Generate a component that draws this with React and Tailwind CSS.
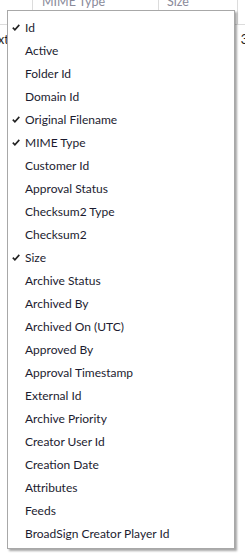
import React from 'react';

const columns = [
    { label: 'Id', checked: true },
    { label: 'Active' },
    { label: 'Folder Id' },
    { label: 'Domain Id' },
    { label: 'Original Filename', checked: true },
    { label: 'MIME Type', checked: true },
    { label: 'Customer Id' },
    { label: 'Approval Status' },
    { label: 'Checksum2 Type' },
    { label: 'Checksum2' },
    { label: 'Size', checked: true },
    { label: 'Archive Status' },
    { label: 'Archived By' },
    { label: 'Archived On (UTC)' },
    { label: 'Approved By' },
    { label: 'Approval Timestamp' },
    { label: 'External Id' },
    { label: 'Archive Priority' },
    { label: 'Creator User Id' },
    { label: 'Creation Date' },
    { label: 'Attributes' },
    { label: 'Feeds' },
    { label: 'BroadSign Creator Player Id' },
];

const Check = () => (
    <svg width="8" height="7" viewBox="0 0 8 7" className="text-[#222]">
        <path d="M0.8 3.6 L2.9 5.8 L7.3 0.9" fill="none" stroke="currentColor" strokeWidth="1.6" />
    </svg>
);

const App = () => {
    return (
        <div className="relative w-[245px] h-[558px] overflow-hidden bg-white font-['Lato',sans-serif] text-[12px]">
            {/* grid behind the menu */}
            <div className="flex h-[25px] border-b border-[#dcdcdc] text-[#8a8a9a] text-[12.5px]">
                <div className="w-[33px] border-r border-[#dcdcdc]" />
                <div className="w-[126px] border-r border-[#dcdcdc] pl-[9px] leading-[10px] -mt-[3px]">MIME Type</div>
                <div className="w-[79px] border-r border-[#dcdcdc] pl-[8px] leading-[10px] -mt-[3px]">Size</div>
                <div className="flex-1" />
            </div>
            <div className="flex justify-between h-[30px] items-center text-[#222] text-[12.5px]">
                <span className="-ml-[2px]">xt</span>
                <span className="-mr-[3px]">3</span>
            </div>

            {/* column chooser */}
            <div className="absolute left-[7px] top-[10px] w-[228px] border border-[#a8a8a8] bg-white pt-[5px] pb-[3px] shadow-[2px_2px_2px_rgba(0,0,0,0.35)]">
                {columns.map((c) => (
                    <div key={c.label} className="flex items-center h-[23px] text-[#1c1c30]">
                        <div className="w-[17px] pl-[4px] flex items-center">{c.checked && <Check />}</div>
                        <span>{c.label}</span>
                    </div>
                ))}
            </div>
        </div>
    );
};

export default App;
